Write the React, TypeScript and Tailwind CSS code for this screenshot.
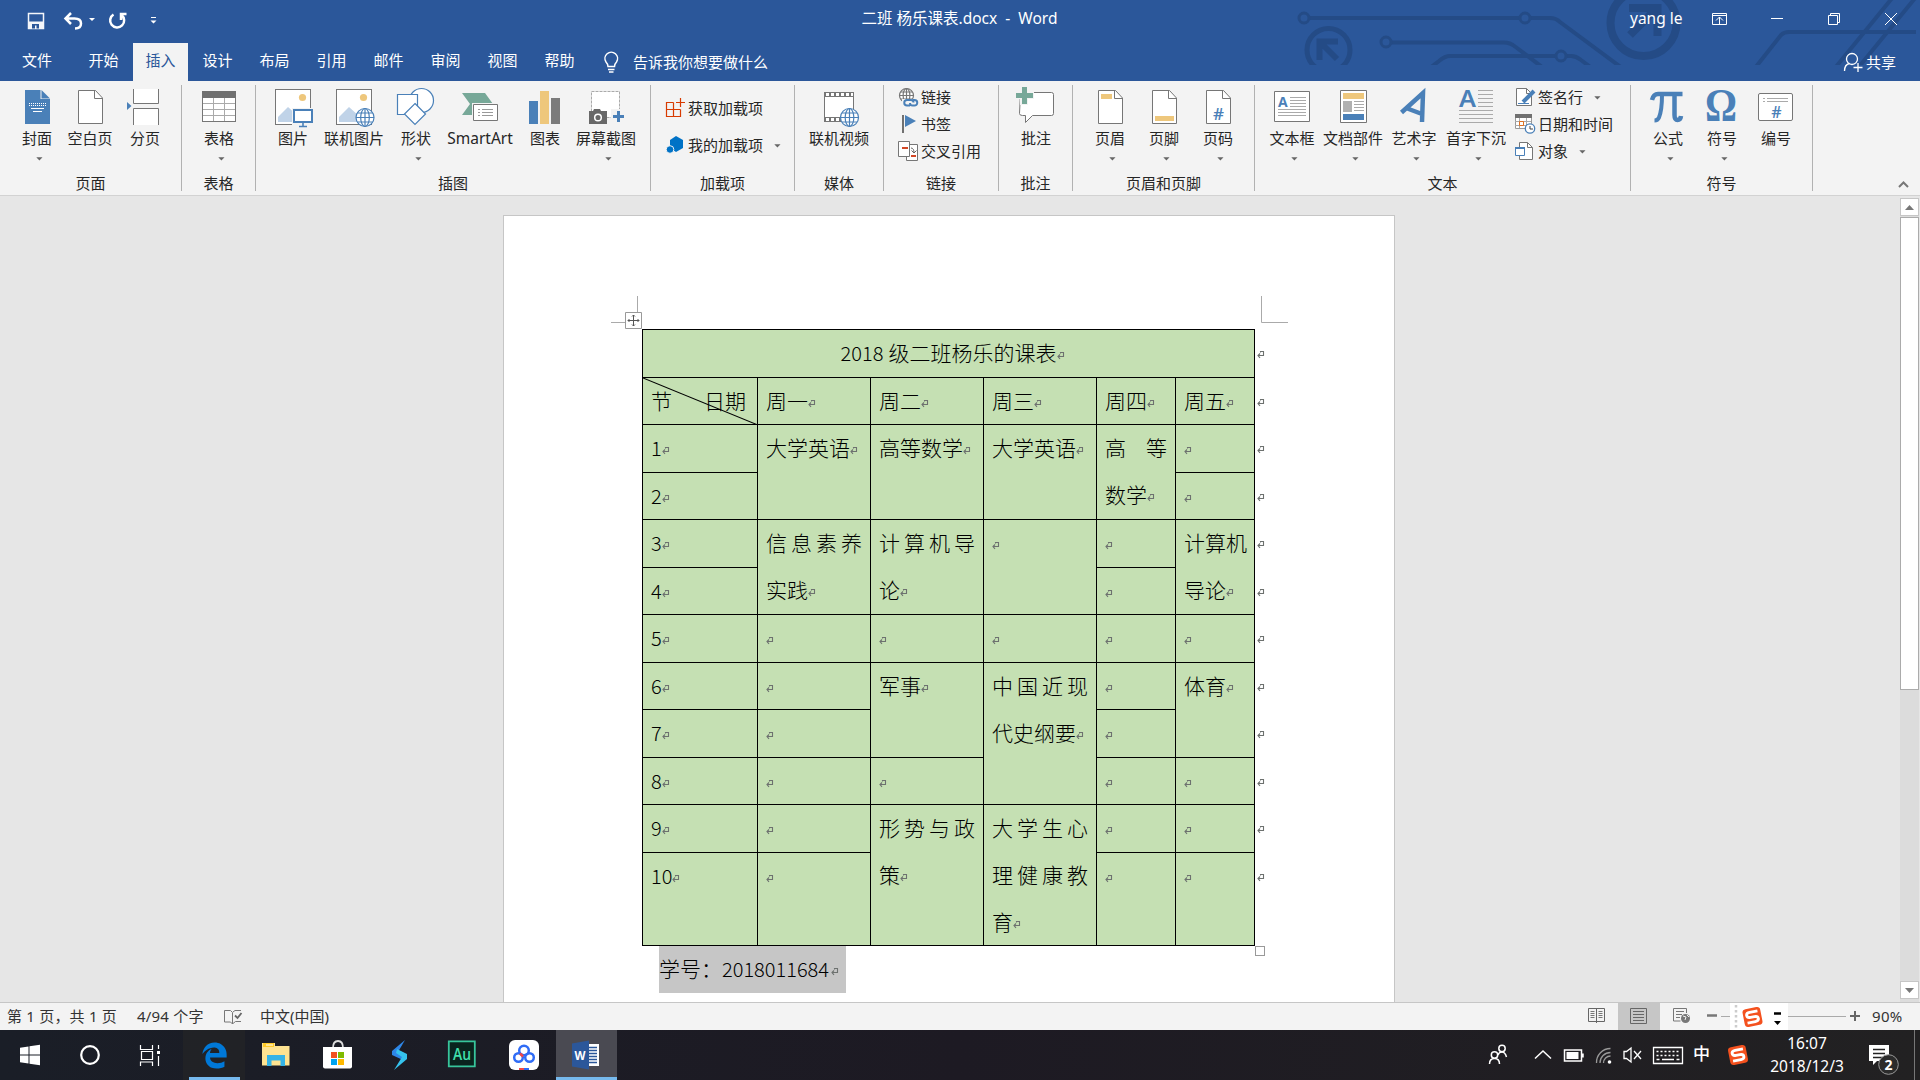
import type { ReactNode } from 'react';
import { FaEdgeLegacy } from 'react-icons/fa';

const BLUE = '#4a80b8';
const GRAY = '#767676';
const GOLD = '#eec77c';
const TEAL = '#77a898';

/* Drawing surface whose user units are window coordinates. */
function Art({ x, y, w, h, children, className = '' }: { x: number; y: number; w: number; h: number; children: ReactNode; className?: string }) {
  return (
    <svg width={w} height={h} viewBox={`${x} ${y} ${w} ${h}`} fill="none" className={`block shrink-0 overflow-visible ${className}`}>
      {children}
    </svg>
  );
}

function Caret({ className = '' }: { className?: string }) {
  return (
    <svg width="7" height="4" viewBox="0 0 7 4" className={`block shrink-0 ${className}`}>
      <path d="M0.3 0.3h6.2L3.4 3.6z" fill="#666" />
    </svg>
  );
}

function Big({ c, label, caret, className, children }: { c: number; label: string; caret?: boolean; className: string; children: ReactNode }) {
  return (
    <div className={`flex shrink-0 flex-col items-center ${className}`}>
      <Art x={c - 22} y={86} w={44} h={42} className="mt-[5px]">{children}</Art>
      <span className="h-5 leading-5 whitespace-nowrap">{label}</span>
      {caret && <Caret className="mt-[9px] ml-1" />}
    </div>
  );
}

function Group({ label, className, children }: { label: string; className: string; children: ReactNode }) {
  return (
    <div className={`flex shrink-0 ${className}`}>
      <div className="flex min-w-0 flex-1 flex-col">
        <div className="flex h-[92px]">{children}</div>
        <div className="h-5 text-center leading-5">{label}</div>
      </div>
      <div className="mt-1 h-[106px] w-px bg-[#b1b1b1]" />
    </div>
  );
}

function Row({ x, y, label, caret, children }: { x: number; y: number; label: string; caret?: boolean; children: ReactNode }) {
  return (
    <div className="flex h-[27px] items-center whitespace-nowrap">
      <Art x={x} y={y} w={22} h={22}>{children}</Art>
      <span className="ml-px">{label}</span>
      {caret && <Caret className="ml-[11px]" />}
    </div>
  );
}

function Sheet({ x }: { x: number }) {
  return (
    <>
      <path d={`M${x + 0.5} 90.5h17l7 7.5v25.500h-24z`} fill="#fff" stroke={GRAY} />
      <path d={`M${x + 16.5} 90.500v8h8`} stroke={GRAY} />
    </>
  );
}

function Globe({ cx, cy, r, color = BLUE }: { cx: number; cy: number; r: number; color?: string }) {
  return (
    <g stroke={color} strokeWidth="1.200">
      <circle cx={cx} cy={cy} r={r} fill="#fff" />
      <ellipse cx={cx} cy={cy} rx={r * 0.48} ry={r} />
      <path d={`M${cx - r} ${cy}h${2 * r}M${cx} ${cy - r}v${2 * r}M${cx - r * 0.85} ${cy - r * 0.5}h${r * 1.7}M${cx - r * 0.85} ${cy + r * 0.5}h${r * 1.7}`} />
    </g>
  );
}

function Photo({ x }: { x: number }) {
  return (
    <>
      <rect x={x + 0.5} y="89.500" width="35" height="35" fill="#fff" stroke={GRAY} />
      <circle cx={x + 27.5} cy="97.500" r="3.600" fill={GOLD} />
      <path d={`M${x + 3} 122v-5l10-10 10 9v6z`} fill="#c0d3e8" />
    </>
  );
}

function Sogou({ cx, cy }: { cx: number; cy: number }) {
  return (
    <g transform={`rotate(-11 ${cx} ${cy})`}>
      <rect x={cx - 9} y={cy - 9} width="18" height="18" rx="3.500" fill="#f4511e" />
      <path d={`M${cx + 6} ${cy - 5}h-8q-3.500 0-3.500 2.500t3.500 2.500h4q3.500 0 3.500 2.500t-3.500 2.500h-8`} stroke="#fff" strokeWidth="2.800" />
    </g>
  );
}

function Circuit() {
  return (
    <svg width="650" height="65" viewBox="1270 0 650 65" fill="none" stroke="#244b86" className="pointer-events-none absolute top-0 right-0">
      <g strokeWidth="4">
        <path d="M1309 18h211M1530 18h20q6 0 10 4l62 46M1391 42.500h113q6 0 11 4l29 22M1430 68l9-7q6-5 11-5h106M1566 56h5q5 0 10 4l12 9M1755 68l26-33q3-3 8-3h127" />
        <path d="M1835 68l58-71M1858 68l58-71" />
      </g>
      <g strokeWidth="3">
        <circle cx="1304" cy="18" r="5" />
        <circle cx="1525" cy="18" r="5" />
        <circle cx="1386" cy="42" r="5" />
        <circle cx="1561" cy="56" r="5" />
      </g>
      <circle cx="1328.500" cy="50" r="21.500" strokeWidth="5" />
      <path d="M1338 41.500h-18.500v18.500M1320 42l17 17" strokeWidth="6" />
      <circle cx="1643.500" cy="23" r="33" strokeWidth="8" />
      <path d="M1629 8h28.500v28M1630 35l26-26" strokeWidth="8" />
    </svg>
  );
}

function TitleBar() {
  return (
    <header className="relative h-[81px] bg-[#2b579a] text-white">
      <Circuit />
      <div className="relative flex h-[37px] items-center">
        <Art x={20} y={4} w={150} h={30} className="ml-5">
          <path d="M28.500 13.500h15v15h-15z" stroke="#f4f6fa" strokeWidth="1.500" />
          <path d="M28 21.500h16v7h-16z" fill="#f4f6fa" />
          <path d="M32 24h7v4.500h-2.500v-3h-1.500v3h-3z" fill="#2b579a" />
          <path d="M71 13l-5.500 5.500 5.500 5.500M66 18.500h8.500q6.500 0 6.500 5t-6 5" stroke="#fff" strokeWidth="2.500" />
          <path d="M89 18h6l-3 3zM150.500 20.500h6l-3 3z" fill="#fff" />
          <path d="M151 17.500h5" stroke="#fff" />
          <path d="M113.500 14.500a7 7 0 1 0 8 0.500M121 20v-6h5.500" stroke="#fff" strokeWidth="2.500" />
        </Art>
        <div className="ml-[690px] w-[199px] text-center text-[15.500px] whitespace-pre">二班 杨乐课表.docx  -  Word</div>
        <div className="ml-[571px] w-[54px] text-[15.500px] whitespace-nowrap">yang le</div>
        <Art x={1700} y={4} w={210} h={30} className="ml-4">
          <g stroke="#fff">
            <path d="M1712.500 13.500h14v11h-14zM1712.500 15.500h14M1719.500 24v-7M1716 20.500l3.500-3.500 3.500 3.500M1771 18.500h12M1828.500 15.500h9v9h-9zM1830.500 15.500v-2h9v9h-2M1885 13l12 12M1897 13l-12 12" />
          </g>
        </Art>
      </div>
      <nav className="relative mt-[6px] flex h-[38px] items-center leading-[34px]">
        <div className="w-[75px] pr-px pb-1 text-center">文件</div>
        {['开始', '插入', '设计', '布局', '引用', '邮件', '审阅', '视图', '帮助'].map((t) => (
          <div key={t} className="w-[57px] px-px">
            <div className={t === '插入' ? 'h-[38px] bg-[#f3f3f3] text-center text-[#2b579a]' : 'h-[38px] text-center'}>{t}</div>
          </div>
        ))}
        <Art x={600} y={48} w={24} h={26} className="ml-3">
          <path d="M608 65.500q0-2.500-2-4.500a6.300 6.300 0 1 1 10.500 0q-2 2-2 4.500zM608 68.500h6.500M609 71h4.500" stroke="#fff" strokeWidth="1.500" />
        </Art>
        <span className="ml-[9px]">告诉我你想要做什么</span>
        <Art x={1842} y={50} w={22} h={24} className="ml-auto">
          <g stroke="#fff" strokeWidth="1.300">
            <circle cx="1852" cy="59" r="5.500" />
            <path d="M1844.500 71q0-6.500 5-7.500M1858 63v9M1853.500 67.500h9" />
          </g>
        </Art>
        <span className="mr-[24px] ml-[2px]">共享</span>
      </nav>
    </header>
  );
}

function Ribbon() {
  return (
    <div className="flex h-[115px] shrink-0 border-b border-[#d2d2d2] bg-[#f3f3f3] text-[#262626]">
      <Group label="页面" className="w-[182px]">
        <Big c={37} label="封面" caret className="ml-[22px] w-[30px]">
          <path d="M25 90h15.500v9h9.500v25h-25z" fill={BLUE} />
          <path d="M41.500 90l8.500 8.500h-8.500z" fill={BLUE} />
          <path d="M29 103.500h17M29 105.500h17" stroke="#fff" strokeDasharray="1 1" />
          <path d="M31 108.500h13M33 111.500h9" stroke="#fff" />
        </Big>
        <Big c={90} label="空白页" className="ml-[15px] w-[46px]"><Sheet x={78} /></Big>
        <Big c={145} label="分页" className="ml-[17px] w-[30px]">
          <path d="M133.500 89v14.500h25v-14.500M133.500 125v-16.500h25v16.500" fill="#fff" stroke={GRAY} />
          <path d="M127 102l4.500 4-4.500 4z" fill={BLUE} />
        </Big>
      </Group>
      <Group label="表格" className="w-[74px]">
        <Big c={219} label="表格" caret className="ml-[22px] w-[30px]">
          <rect x="202.500" y="91.500" width="33" height="30" fill="#fff" stroke={GRAY} />
          <path d="M202 91h34v7h-34z" fill="#707070" />
          <path d="M213.500 98v23M224.500 98v23M203 103.500h32M203 109.500h32M203 115.500h32" stroke="#aaa" />
        </Big>
      </Group>
      <Group label="插图" className="w-[395px]">
        <Big c={293} label="图片" className="ml-[22px] w-[30px]">
          <Photo x={275} />
          <path d="M292 108h22v20h-22z" fill="#f3f3f3" />
          <path d="M294 110h18v12h-18z" fill="#fff" stroke={BLUE} strokeWidth="2" />
          <path d="M303 122v4M299 126.500h8" stroke={BLUE} strokeWidth="1.600" />
        </Big>
        <Big c={354} label="联机图片" className="ml-[16px] w-[60px]">
          <Photo x={336} />
          <Globe cx={365} cy={117.5} r={9} />
        </Big>
        <Big c={416} label="形状" caret className="ml-[17px] w-[30px]">
          <g fill="#fff" stroke={BLUE} strokeWidth="1.200">
            <circle cx="421.500" cy="100.500" r="12" />
            <path d="M397.500 94.500h20v20h-20z" />
            <path d="M415 103.500l10.500 10.500-10.500 10.500-10.500-10.500z" />
          </g>
        </Big>
        <Big c={480} label="SmartArt" className="ml-[16px] w-[66px] text-[15.500px]">
          <path d="M462 93h23l8 11-8 11h-23l8-11z" fill={TEAL} />
          <path d="M472 103h27v19h-27z" fill="#f3f3f3" />
          <path d="M473.500 104.500h24v16h-24z" fill="#fff" stroke={GRAY} />
          <path d="M478 109.500h2M482 109.500h11M478 112.500h2M482 112.500h11M478 115.500h2M482 115.500h11" stroke="#999" />
        </Big>
        <Big c={545} label="图表" className="ml-[17px] w-[30px]">
          <path d="M529 101h9v23h-9z" fill={BLUE} />
          <path d="M540 91h9v33h-9z" fill={GOLD} />
          <path d="M551 98h9v26h-9z" fill="#7b7b7b" />
        </Big>
        <Big c={606} label="屏幕截图" caret className="ml-[16px] w-[60px]">
          <path d="M591.500 91.500h28v26h-28z" fill="#fff" stroke="#aaa" strokeDasharray="3 1" />
          <path d="M611 109h14v15h-14z" fill="#f3f3f3" />
          <path d="M589 111h4l1-2h6l1 2h6v13h-18z" fill="#686868" />
          <circle cx="598" cy="117.500" r="3.300" stroke="#fff" strokeWidth="1.500" />
          <path d="M613 116.500h11M618.500 111v11" stroke={BLUE} strokeWidth="3" />
        </Big>
      </Group>
      <Group label="加载项" className="w-[144px]">
        <div className="ml-[14px] flex flex-col gap-[10px] pt-[14px]">
          <Row x={665} y={98} label="获取加载项">
            <path d="M673.500 102.500h-7v14h14v-7M673.500 102.500v14M666.500 109.500h14" stroke="#d83b01" strokeWidth="1.200" />
            <path d="M680.500 98v9M676 102.500h9" stroke="#d83b01" strokeWidth="1.200" />
          </Row>
          <Row x={665} y={135} label="我的加载项" caret>
            <path d="M676 136l7 4v8l-7 4-6-4v-8z" fill="#0072c6" />
            <circle cx="670" cy="149.500" r="3.800" fill="#0072c6" stroke="#f3f3f3" />
          </Row>
        </div>
      </Group>
      <Group label="媒体" className="w-[89px]">
        <Big c={839} label="联机视频" className="ml-[14px] w-[60px]">
          <path d="M824.500 92.500h29v29h-29z" fill="#fff" stroke={GRAY} />
          <path d="M824 94.500h30M824 119.500h20" stroke={GRAY} strokeWidth="5" />
          <path d="M826 94.500h27M826 119.500h17" stroke="#fff" strokeWidth="3" strokeDasharray="3 2" />
          <Globe cx={849.5} cy={117.5} r={9} />
        </Big>
      </Group>
      <Group label="链接" className="w-[115px]">
        <div className="ml-[14px] flex flex-col pt-[3px]">
          <Row x={898} y={87} label="链接">
            <Globe cx={906.5} cy={95.5} r={7} color="#777" />
            <path d="M902 99h16v8h-16z" fill="#f3f3f3" />
            <path d="M910 105.500h-3a2.500 2.500 0 0 1 0-5.500h4q2.500 0 2.500 2.500M910 103q0 2.500 2.500 2.500h2a2.600 2.600 0 0 0 0-5.500h-2" stroke={BLUE} strokeWidth="2" />
          </Row>
          <Row x={898} y={114} label="书签">
            <path d="M903 115v18" stroke="#707070" strokeWidth="2" />
            <path d="M905 115l11 6-11 6z" fill={BLUE} />
          </Row>
          <Row x={898} y={141} label="交叉引用">
            <path d="M906.500 144.500h11v16h-11z" fill="#fff" stroke={GRAY} />
            <path d="M898.500 141.500h11v15h-11z" fill="#fff" stroke={GRAY} />
            <path d="M902 148h6M911 156h5" stroke="#d24726" strokeWidth="2" />
            <path d="M911 148q3 0 3 5M911.500 150.500l2.500 2.500 2.500-2.500" stroke="#666" />
          </Row>
        </div>
      </Group>
      <Group label="批注" className="w-[74px]">
        <Big c={1036} label="批注" className="ml-[22px] w-[30px]">
          <path d="M1020.500 92.500h31q2 0 2 2v19q0 2-2 2h-19l-7 7v-7h-3q-3 0-3-2z" fill="#fff" stroke={GRAY} />
          <path d="M1015 91h5v-5h8v5h6v8h-6v6h-8v-6h-5z" fill="#f3f3f3" />
          <path d="M1016 95.500h17M1024.500 87v17" stroke={TEAL} strokeWidth="5" />
        </Big>
      </Group>
      <Group label="页眉和页脚" className="w-[182px]">
        <Big c={1110} label="页眉" caret className="ml-[22px] w-[30px]">
          <Sheet x={1098} />
          <path d="M1101 94h11v5h-11z" fill={GOLD} />
        </Big>
        <Big c={1164} label="页脚" caret className="ml-[24px] w-[30px]">
          <Sheet x={1152} />
          <path d="M1155 116h19v5h-19z" fill={GOLD} />
        </Big>
        <Big c={1218} label="页码" caret className="ml-[24px] w-[30px]">
          <Sheet x={1206} />
          <text x="1218.500" y="120" textAnchor="middle" fill={BLUE} fontSize="17" fontWeight="600" fontFamily="Open Sans, sans-serif">#</text>
        </Big>
      </Group>
      <Group label="文本" className="w-[376px]">
        <Big c={1292} label="文本框" caret className="ml-[14px] w-[46px]">
          <path d="M1274.500 91.500h35v30h-35z" fill="#fff" stroke={GRAY} />
          <text x="1278" y="107" fill={BLUE} fontSize="14" fontWeight="700" fontFamily="Open Sans, sans-serif">A</text>
          <path d="M1290 97.500h16M1290 100.500h16M1290 103.500h16M1290 106.500h16M1278 109.500h28M1278 112.500h28M1278 115.500h28" stroke="#aaa" />
        </Big>
        <Big c={1353} label="文档部件" caret className="ml-[8px] w-[60px]">
          <path d="M1340.500 90.500h26v32h-26z" fill="#fff" stroke={GRAY} />
          <path d="M1343 93h21v6h-21z" fill={GOLD} />
          <path d="M1343 101h9v11h-9z" fill="#b0b0b0" />
          <path d="M1354 101.500h10M1354 104.500h10M1354 107.500h10M1354 110.500h10" stroke="#aaa" />
          <path d="M1343 114h21v6h-21z" fill={BLUE} />
        </Big>
        <Big c={1415} label="艺术字" caret className="ml-[8px] w-[46px]">
          <path d="M1402.500 112.500l21.500-19.500-1 29M1407 108l16 6" stroke={BLUE} strokeWidth="4.500" />
        </Big>
        <Big c={1476} label="首字下沉" caret className="ml-[9px] w-[60px]">
          <text x="1459" y="107" fill={BLUE} fontSize="24" fontWeight="600" fontFamily="Noto Sans, sans-serif" textLength="17" lengthAdjust="spacingAndGlyphs">A</text>
          <path d="M1478 90.500h15M1478 94.500h15M1478 98.500h15M1478 102.500h15M1478 106.500h15M1459 110.500h34M1459 114.500h34M1459 118.500h34M1459 122.500h34" stroke="#aaa" />
        </Big>
        <div className="ml-[9px] flex flex-col pt-[3px]">
          <Row x={1515} y={87} label="签名行" caret>
            <path d="M1516.500 88.500h10l5 5v12h-15z" fill="#fff" stroke={GRAY} />
            <path d="M1526.500 88.500v5h5" stroke={GRAY} />
            <path d="M1534 91l-11 11" stroke={BLUE} strokeWidth="4" />
            <path d="M1518 103.500h11" stroke={BLUE} />
          </Row>
          <Row x={1515} y={114} label="日期和时间">
            <path d="M1515.500 115.500h16v13h-16z" fill="#fff" stroke="#999" />
            <path d="M1515 114h17v4h-17z" fill="#707070" />
            <path d="M1519.500 118v10M1526.500 118v10M1515 121.500h16M1515 125.500h16" stroke="#aaa" />
            <path d="M1519.500 121.500h4v4h-4z" stroke="#e07020" />
            <circle cx="1530" cy="128.500" r="4.700" fill="#fff" stroke={BLUE} strokeWidth="1.300" />
            <path d="M1530 126v3h3" stroke="#444" />
          </Row>
          <Row x={1515} y={141} label="对象" caret>
            <path d="M1519.500 142.500h8l5 5v12h-13z" fill="#fff" stroke={GRAY} />
            <path d="M1527.500 142.500v5h5" stroke={GRAY} />
            <path d="M1515.500 147.500h9v8h-9z" fill="#fff" stroke={BLUE} />
            <path d="M1515 148h10" stroke={BLUE} strokeWidth="2" />
          </Row>
        </div>
      </Group>
      <Group label="符号" className="w-[182px]">
        <Big c={1668} label="公式" caret className="ml-[22px] w-[30px]">
          <g stroke={BLUE}>
            <path d="M1652 100q1.500-6 6-6h24.500" strokeWidth="4.500" />
            <path d="M1662 95q0 15-3 22.500q-1.200 3-4.500 3" strokeWidth="4" />
            <path d="M1674.500 95v20q0 5 3 5t3.500-4" strokeWidth="4.500" />
          </g>
        </Big>
        <Big c={1722} label="符号" caret className="ml-[24px] w-[30px]">
          <text x="1705" y="121" fill={BLUE} fontSize="46" fontWeight="700" fontFamily="Liberation Serif, serif" textLength="32" lengthAdjust="spacingAndGlyphs">Ω</text>
        </Big>
        <Big c={1776} label="编号" className="ml-[24px] w-[30px]">
          <rect x="1758.500" y="93.500" width="34" height="27" rx="1.500" fill="#fff" stroke={GRAY} />
          <path d="M1763 98.500h2M1767 98.500h21M1763 101.500h2M1767 101.500h21" stroke="#aaa" />
          <text x="1776.500" y="118" textAnchor="middle" fill={BLUE} fontSize="16" fontWeight="600" fontFamily="Open Sans, sans-serif">#</text>
        </Big>
      </Group>
      <Art x={1896} y={176} w={16} h={16} className="mt-[95px] mr-2 ml-auto">
        <path d="M1899 187l4.500-4.500 4.500 4.500" stroke="#777" strokeWidth="2" />
      </Art>
    </div>
  );
}

function Mark({ className = '' }: { className?: string }) {
  return (
    <svg width="8" height="8" viewBox="0 0 8 8" fill="none" stroke="#6d716f" strokeWidth="1.100" className={`inline-block shrink-0 ${className}`}>
      <path d="M3.500 1.500V0.500H6.500V4.500H1M3 2.500L1 4.500L3 6.800" />
    </svg>
  );
}

type CellData = { pos: string; lines: string[] };

const cells: CellData[] = [
  { pos: 'col-start-2 row-start-2', lines: ['周一'] },
  { pos: 'col-start-3 row-start-2', lines: ['周二'] },
  { pos: 'col-start-4 row-start-2', lines: ['周三'] },
  { pos: 'col-start-5 row-start-2', lines: ['周四'] },
  { pos: 'col-start-6 row-start-2', lines: ['周五'] },
  { pos: 'col-start-1 row-start-3', lines: ['1'] },
  { pos: 'col-start-1 row-start-4', lines: ['2'] },
  { pos: 'col-start-1 row-start-5', lines: ['3'] },
  { pos: 'col-start-1 row-start-6', lines: ['4'] },
  { pos: 'col-start-1 row-start-7', lines: ['5'] },
  { pos: 'col-start-1 row-start-8', lines: ['6'] },
  { pos: 'col-start-1 row-start-9', lines: ['7'] },
  { pos: 'col-start-1 row-start-10', lines: ['8'] },
  { pos: 'col-start-1 row-start-11', lines: ['9'] },
  { pos: 'col-start-1 row-start-12', lines: ['10'] },
  { pos: 'col-start-2 row-start-3 row-span-2', lines: ['大学英语'] },
  { pos: 'col-start-2 row-start-5 row-span-2', lines: ['信息素养', '实践'] },
  { pos: 'col-start-2 row-start-7', lines: [''] },
  { pos: 'col-start-2 row-start-8', lines: [''] },
  { pos: 'col-start-2 row-start-9', lines: [''] },
  { pos: 'col-start-2 row-start-10', lines: [''] },
  { pos: 'col-start-2 row-start-11', lines: [''] },
  { pos: 'col-start-2 row-start-12', lines: [''] },
  { pos: 'col-start-3 row-start-3 row-span-2', lines: ['高等数学'] },
  { pos: 'col-start-3 row-start-5 row-span-2', lines: ['计算机导', '论'] },
  { pos: 'col-start-3 row-start-7', lines: [''] },
  { pos: 'col-start-3 row-start-8 row-span-2', lines: ['军事'] },
  { pos: 'col-start-3 row-start-10', lines: [''] },
  { pos: 'col-start-3 row-start-11 row-span-2', lines: ['形势与政', '策'] },
  { pos: 'col-start-4 row-start-3 row-span-2', lines: ['大学英语'] },
  { pos: 'col-start-4 row-start-5 row-span-2', lines: [''] },
  { pos: 'col-start-4 row-start-7', lines: [''] },
  { pos: 'col-start-4 row-start-8 row-span-3', lines: ['中国近现', '代史纲要'] },
  { pos: 'col-start-4 row-start-11 row-span-2', lines: ['大学生心', '理健康教', '育'] },
  { pos: 'col-start-5 row-start-3 row-span-2', lines: ['高等', '数学'] },
  { pos: 'col-start-5 row-start-5', lines: [''] },
  { pos: 'col-start-5 row-start-6', lines: [''] },
  { pos: 'col-start-5 row-start-7', lines: [''] },
  { pos: 'col-start-5 row-start-8', lines: [''] },
  { pos: 'col-start-5 row-start-9', lines: [''] },
  { pos: 'col-start-5 row-start-10', lines: [''] },
  { pos: 'col-start-5 row-start-11', lines: [''] },
  { pos: 'col-start-5 row-start-12', lines: [''] },
  { pos: 'col-start-6 row-start-3', lines: [''] },
  { pos: 'col-start-6 row-start-4', lines: [''] },
  { pos: 'col-start-6 row-start-5 row-span-2', lines: ['计算机', '导论'] },
  { pos: 'col-start-6 row-start-7', lines: [''] },
  { pos: 'col-start-6 row-start-8 row-span-2', lines: ['体育'] },
  { pos: 'col-start-6 row-start-10', lines: [''] },
  { pos: 'col-start-6 row-start-11', lines: [''] },
  { pos: 'col-start-6 row-start-12', lines: [''] },
];

function Cell({ pos, lines }: CellData) {
  return (
    <div className={`border-r border-b border-black px-2 ${pos}`}>
      {lines.map((line, i) => {
        const last = i === lines.length - 1;
        return (
          <div key={i} className={last ? 'flex h-[47px] items-center whitespace-nowrap' : 'flex h-[47px] items-center justify-between pb-[2px]'}>
            {last ? <span className={/^\d/.test(line) ? 'pb-px text-[20px]' : 'pb-[2px]'}>{line}</span> : line.split('').map((ch) => <span key={ch}>{ch}</span>)}
            {last && <Mark className="mt-1" />}
          </div>
        );
      })}
    </div>
  );
}

const rowGrid = 'grid-rows-[48px_47px_48px_47px_48px_47px_48px_47px_48px_47px_48px_93px]';

function Document() {
  return (
    <main className="flex min-h-0 flex-1 bg-[#e6e6e6]">
      <div className="relative mt-[19px] ml-[503px] w-[892px] overflow-hidden border border-b-0 border-[#c6c6c6] bg-white pt-[113px] pl-[138px] font-['Noto_Sans_CJK_SC',sans-serif] text-[21px] font-light text-black">
        <Art x={610} y={290} w={34} h={42} className="absolute top-[74px] left-[106px]">
          <path d="M637.500 296v17M611 322.500h14" stroke="#aaa" />
          <path d="M625.500 312.500h16v16h-16z" fill="#fff" stroke="#999" />
          <path d="M633.500 315v11M628 320.500h11M632 316.500l1.500-1.500 1.500 1.500M632 324.500l1.500 1.500 1.500-1.500M629.500 319l-1.500 1.500 1.500 1.500M637.500 319l1.500 1.500-1.500 1.500" stroke="#555" />
        </Art>
        <Art x={1260} y={290} w={30} h={42} className="absolute top-[74px] left-[756px]">
          <path d="M1261.500 296v26.500h26.500" stroke="#aaa" />
        </Art>
        <div className="flex">
          <div className={`grid shrink-0 grid-cols-[115px_113px_113px_113px_79px_79px] border-t border-l border-black bg-[#c5e0b3] ${rowGrid}`}>
            <div className="col-span-6 flex items-center justify-center border-r border-b border-black pl-[9px]">
              <span className="pb-[2px] text-[20px]">2018</span>
              <span className="ml-[5px] pb-[2px]">级二班杨乐的课表</span>
              <Mark className="mt-1 ml-px" />
            </div>
            <div className="relative col-start-1 row-start-2 flex items-center justify-between border-r border-b border-black pr-[11px] pb-px pl-2">
              <span>节</span>
              <span>日期</span>
              <svg width="115" height="47" viewBox="0 0 115 47" className="absolute top-0 left-0">
                <path d="M0 0L115 47" stroke="#000" strokeWidth="1.100" />
              </svg>
            </div>
            {cells.map((cell) => (
              <Cell key={cell.pos} {...cell} />
            ))}
          </div>
          <div className={`grid pt-px pl-[2px] ${rowGrid}`}>
            {Array.from({ length: 12 }, (_, i) => (
              <div key={i} className="flex h-[47px] items-center">
                <Mark className="mt-[3px]" />
              </div>
            ))}
          </div>
        </div>
        <div className="flex items-start justify-between pr-[129px]">
          <div className="ml-[17px] flex h-[47px] w-[187px] items-center bg-[#c6c6c6] whitespace-nowrap">
            <span className="pb-[2px]">学号：</span>
            <span className="pb-[2px] text-[20px]">2018011684</span>
            <Mark className="mt-1 ml-[2px]" />
          </div>
          <div className="size-[10px] border border-[#999] bg-white" />
        </div>
      </div>
      <div className="mt-[2px] mr-px ml-auto flex w-[19px] flex-col bg-[#dcdcdc]">
        <div className="flex h-[18px] items-center justify-center border border-[#c6c6c6] bg-white">
          <svg width="9" height="5" viewBox="0 0 9 5"><path d="M0 5L4.500 0L9 5z" fill="#777" /></svg>
        </div>
        <div className="mt-px h-[473px] border border-[#ababab] bg-white" />
        <div className="mt-auto mb-[3px] flex h-[18px] items-center justify-center border border-[#c6c6c6] bg-white">
          <svg width="9" height="5" viewBox="0 0 9 5"><path d="M0 0L4.500 5L9 0z" fill="#777" /></svg>
        </div>
      </div>
    </main>
  );
}

function StatusBar() {
  return (
    <footer className="flex h-7 shrink-0 items-center border-t border-[#c6c6c6] bg-[#f3f3f3] text-[#333]">
      <span className="ml-[7px] w-[130px] tracking-[0.200px] whitespace-nowrap">第 1 页，共 1 页</span>
      <span className="w-[85px] tracking-[0.200px] whitespace-nowrap">4/94 个字</span>
      <Art x={222} y={1004} w={24} h={24}>
        <path d="M224.500 1009.500h6l2 2v11.500l-2-2h-6zM233 1011l2-1.500h6M241 1020.500h-5.500l-2.500 2" stroke="#777" />
        <path d="M235 1014.500l2.500 2.500 4-5" stroke="#666" strokeWidth="1.800" />
      </Art>
      <span className="ml-[14px]">中文(中国)</span>
      <Art x={1584} y={1003} w={27} h={27} className="ml-auto">
        <path d="M1588.500 1008.500h16v13h-16zM1596.500 1008v15" stroke="#666" />
        <path d="M1590.500 1011.500h4M1590.500 1013.500h4M1590.500 1015.500h4M1590.500 1017.500h4M1598.500 1011.500h4M1598.500 1013.500h4M1598.500 1015.500h4M1598.500 1017.500h4" stroke="#777" />
      </Art>
      <div className="ml-[7px] bg-[#c6c6c6]">
        <Art x={1618} y={1003} w={42} h={27}>
          <path d="M1630.500 1008.500h16v15h-16zM1633 1011.500h11M1633 1014.500h11M1633 1017.500h11M1633 1020.500h11" stroke="#666" />
        </Art>
      </div>
      <Art x={1660} y={1003} w={70} h={27}>
        <path d="M1686.500 1013v-4.500h-13v12.500h7M1676 1011.500h8M1676 1014.500h6M1676 1017.500h4" stroke="#777" />
        <circle cx="1685.500" cy="1018.500" r="4.500" fill="#777" />
        <path d="M1683 1016l3 1-1 3M1687 1015l2 2" stroke="#f3f3f3" />
        <path d="M1707 1015.500h10" stroke="#777" strokeWidth="2.500" />
        <path d="M1721 1016.500h9" stroke="#aaa" />
      </Art>
      <div className="bg-white">
        <Art x={1730} y={1003} w={58} h={27}>
          <path d="M1736 1005v23" stroke="#ccc" strokeWidth="2.500" strokeDasharray="2.500 2.500" />
          <Sogou cx={1752.5} cy={1017} />
          <path d="M1774 1013.500h7" stroke="#000" strokeWidth="2.500" />
          <path d="M1774 1021h7l-3.500 4z" fill="#000" />
        </Art>
      </div>
      <Art x={1788} y={1003} w={84} h={27}>
        <path d="M1788 1016.500h58" stroke="#aaa" />
        <path d="M1850 1016h10M1855 1011v10" stroke="#666" strokeWidth="2" />
      </Art>
      <span className="w-[48px] tracking-[0.300px]">90%</span>
    </footer>
  );
}

function Taskbar() {
  return (
    <div className="flex h-[50px] shrink-0 items-center bg-linear-to-r from-[#1a1e27] via-[#1d1a23] to-[#222122] text-white">
      <Art x={0} y={1030} w={183} h={50}>
        <path d="M20 1047.800l8.500-1.300v8h-8.500zM29.500 1046.300l10.500-1.500v9.700h-10.500zM20 1055.500h8.500v8l-8.500-1.300zM29.500 1055.500h10.500v9.700l-10.500-1.500z" fill="#fff" />
        <circle cx="90" cy="1055" r="8.800" stroke="#fff" strokeWidth="2.200" />
        <path d="M140.500 1045v4.500h12v-4.500M141.500 1051.500h11v8h-11zM140.500 1066v-4h12v4M158.500 1045v4M158.500 1056v10" stroke="#fff" strokeWidth="1.200" />
        <path d="M157 1051h3v3h-3z" fill="#fff" />
      </Art>
      <div className="flex h-[50px] w-[62px] flex-col items-center bg-[#262626]/60 pt-[12px]">
        <FaEdgeLegacy size={27} color="#0078d7" />
        <div className="mt-auto h-[3px] w-[51px] bg-[#76b9ed]" />
      </div>
      <Art x={245} y={1030} w={311} h={50}>
        <path d="M262 1043h13v3h14.500v19.500h-27.500z" fill="#fee391" />
        <path d="M263 1043h11v4h-11z" fill="#ffca28" />
        <path d="M266 1045h7" stroke="#fff" />
        <path d="M267 1066v-11h18v11h-4.500v-5.500h-9v5.500z" fill="#35b3e6" />
        <path d="M333 1048q0-7 5-7t5 7" stroke="#ddd" strokeWidth="1.800" />
        <path d="M323 1047h29v19.500q0 2-2 2h-25q-2 0-2-2z" fill="#fff" />
        <path d="M331 1052h6v6h-6z" fill="#f25022" />
        <path d="M338 1052h6v6h-6z" fill="#7fba00" />
        <path d="M331 1059h6v6h-6z" fill="#00a4ef" />
        <path d="M338 1059h6v6h-6z" fill="#ffb900" />
        <path d="M405 1040l-13 11v4l11 5 1-4-6-4z" fill="#2e86e8" />
        <path d="M394 1070l13-11v-5l-10-5-1 4 6 4z" fill="#35c3ee" />
        <path d="M448.800 1041.300h26v25h-26z" fill="#0a231e" stroke="#37c59b" strokeWidth="1.800" />
        <text x="462" y="1059.500" textAnchor="middle" fill="#41e0ac" fontSize="17" fontWeight="600" fontFamily="Open Sans, sans-serif" textLength="18" lengthAdjust="spacingAndGlyphs">Au</text>
        <rect x="509" y="1040" width="30" height="30" rx="6" fill="#fff" />
        <circle cx="524" cy="1050.500" r="4.800" stroke="#2f6cf6" strokeWidth="2.500" />
        <circle cx="518.500" cy="1057.500" r="4.300" stroke="#2f6cf6" strokeWidth="2.500" />
        <circle cx="529.500" cy="1057.500" r="4.300" stroke="#2f6cf6" strokeWidth="2.500" />
        <path d="M520 1053.500l3 3" stroke="#f04848" strokeWidth="2.500" />
        <path d="M519 1068h5v2h-5z" fill="#f04848" />
        <path d="M524 1068h5v2h-5z" fill="#2f6cf6" />
      </Art>
      <div className="h-[50px] border-b-[3px] border-[#76b9ed] bg-[#4a4a52]">
        <Art x={556} y={1030} w={61} h={47}>
          <path d="M586 1044h13v22h-13z" fill="#fff" />
          <path d="M589 1047.500h8M589 1050.500h8M589 1053.500h8M589 1056.500h8M589 1059.500h8M589 1062.500h8" stroke="#2b579a" strokeWidth="1.400" />
          <path d="M572 1043.500l17-3v29l-17-3z" fill="#2b579a" />
          <text x="580" y="1060" textAnchor="middle" fill="#fff" fontSize="13" fontWeight="700" fontFamily="Open Sans, sans-serif" textLength="11" lengthAdjust="spacingAndGlyphs">W</text>
        </Art>
      </div>
      <Art x={1480} y={1030} w={205} h={50} className="ml-auto">
        <g stroke="#fff" strokeWidth="1.500">
          <circle cx="1502" cy="1048.500" r="3.200" />
          <circle cx="1494.500" cy="1055" r="3.200" />
          <path d="M1489.500 1064q0-5.500 5-5.500t5 5.500M1498 1055q1-3 4-3t4.500 5" />
          <path d="M1535 1058.500l8-7.500 8 7.500" />
          <path d="M1564.500 1050h17v11h-17zM1583 1053.500v4" />
          <path d="M1624 1051.500h2.500l4.500-3.500v14l-4.500-3.500h-2.500zM1634 1051l7 8M1641 1051l-7 8" strokeWidth="1.300" />
          <path d="M1653.500 1047.500h29v16h-29z" strokeWidth="1.300" />
          <path d="M1656.500 1051.500h24M1656.500 1055.500h24" strokeDasharray="2 2" />
          <path d="M1656.500 1059.500h3M1662 1059.500h12M1676.500 1059.500h3" />
        </g>
        <path d="M1566.500 1052h12v7h-12z" fill="#fff" />
        <circle cx="1609.500" cy="1062" r="1.800" fill="#fff" />
        <path d="M1596.500 1063a14 14 0 0 1 14-14.500M1600 1063a10.500 10.500 0 0 1 10.500-10.500M1603.500 1063a7 7 0 0 1 7-7" stroke="#999" strokeWidth="1.300" />
      </Art>
      <span className="ml-[8px] w-[18px] pb-[2px] text-[17px] font-medium">中</span>
      <Art x={1711} y={1030} w={44} h={50}>
        <Sogou cx={1738} cy={1055} />
      </Art>
      <div className="flex w-[104px] flex-col text-center text-[15.500px] leading-[23px]">
        <span>16:07</span>
        <span>2018/12/3</span>
      </div>
      <Art x={1859} y={1030} w={61} h={50}>
        <path d="M1869 1045h20v16h-12l-4 4v-4h-4z" fill="#fff" />
        <path d="M1873 1049.500h12M1873 1053.500h12M1873 1057.500h9" stroke="#222" strokeWidth="1.300" />
        <circle cx="1888.500" cy="1064.500" r="9.800" fill="#2b2b2b" stroke="#999" />
        <text x="1888.500" y="1069.500" textAnchor="middle" fill="#fff" fontSize="14" fontWeight="700" fontFamily="Open Sans, sans-serif">2</text>
        <path d="M1914.500 1030v50" stroke="#777" />
      </Art>
    </div>
  );
}

export default function App() {
  return (
    <div className="flex h-[1080px] w-[1920px] flex-col overflow-hidden font-['Noto_Sans','Noto_Sans_CJK_SC',sans-serif] text-[15px]">
      <TitleBar />
      <Ribbon />
      <Document />
      <StatusBar />
      <Taskbar />
    </div>
  );
}
